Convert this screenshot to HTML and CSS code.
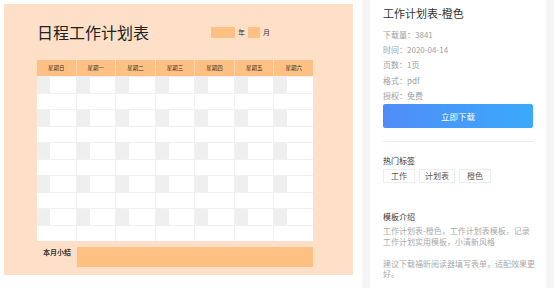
FILE: index.html
```html
<!DOCTYPE html>
<html lang="zh-CN">
<head>
    <meta charset="UTF-8">
    <meta name="viewport" content="width=device-width, initial-scale=1.0">
    <title>工作计划表-橙色</title>
    <link rel="stylesheet" href="styles.css">
</head>
<body>
    <div class="preview">
        <div class="sheet">
            <div class="sheet-head">
                <h1 class="sheet-title">日程工作计划表</h1>
                <div class="date">
                    <span class="date-box year"></span>
                    <span>年</span>
                    <span class="date-box month"></span>
                    <span>月</span>
                </div>
            </div>

            <div class="week-head">
                <div>星期日</div>
                <div>星期一</div>
                <div>星期二</div>
                <div>星期三</div>
                <div>星期四</div>
                <div>星期五</div>
                <div>星期六</div>
            </div>
            <div class="week-body" id="week-body"></div>

            <div class="summary">
                <div class="summary-label">本月小结</div>
                <div class="summary-box"></div>
            </div>
        </div>
    </div>

    <div class="info">
        <h2 class="info-title">工作计划表-橙色</h2>
        <ul class="meta">
            <li>下载量：3841</li>
            <li>时间：2020-04-14</li>
            <li>页数：1页</li>
            <li>格式：pdf</li>
            <li>授权：免费</li>
        </ul>
        <button class="btn">立即下载</button>

        <div class="divider"></div>

        <h3 class="section-title">热门标签</h3>
        <div class="tags">
            <span class="tag">工作</span>
            <span class="tag">计划表</span>
            <span class="tag">橙色</span>
        </div>

        <h3 class="section-title intro-title">模板介绍</h3>
        <p class="desc">工作计划表-橙色，工作计划表模板，记录工作计划实用模板，小清新风格</p>
        <p class="desc">建议下载福昕阅读器填写表单，适配效果更好。</p>
    </div>

    <script>
        const body = document.getElementById('week-body');
        for (let r = 0; r < 10; r++) {
            for (let c = 0; c < 7; c++) {
                const cell = document.createElement('div');
                cell.className = r % 2 === 0 ? 'cell cell-date' : 'cell';
                body.appendChild(cell);
            }
        }
    </script>
</body>
</html>
```

FILE: styles.css
```css
* {
    margin: 0;
    padding: 0;
    box-sizing: border-box;
    font-family: "Noto Sans CJK SC", "Noto Sans", sans-serif;
}

body {
    background-color: #f5f5f5;
    display: flex;
    gap: 8px;
    height: 288px;
    overflow: hidden;
}

.preview {
    width: 362px;
    flex: none;
    background: #fff;
    padding: 4px 9px 0 4px;
}

.sheet {
    background: #fee0c8;
    height: 271px;
    padding: 18px 40px 0 33px;
}

.sheet-head {
    display: flex;
    align-items: center;
    height: 20px;
}

.sheet-title {
    width: 174px;
    flex: none;
    font-size: 16px;
    font-weight: 400;
    line-height: 20px;
    color: #222;
}

.date {
    display: flex;
    align-items: center;
    gap: 3px;
    font-size: 7px;
    color: #333;
}

.date-box {
    display: block;
    height: 11px;
    background: #ffc183;
}

.date-box.year {
    width: 24px;
}

.date-box.month {
    width: 12px;
}

.week-head {
    margin-top: 18px;
    display: grid;
    grid-template-columns: repeat(7, 1fr);
    gap: 1px;
    background: #ffd7b0;
    height: 16px;
}

.week-head div {
    background: #ffc183;
    font-size: 5.5px;
    line-height: 16px;
    text-align: center;
    color: #3e2c1e;
}

.week-body {
    display: grid;
    grid-template-columns: repeat(7, 1fr);
    grid-template-rows: repeat(10, 1fr);
    gap: 1px;
    background: #f1f1f1;
    height: 165px;
    border-top: 1px solid #f1f1f1;
}

.cell {
    background: #fff;
}

.cell-date {
    background: linear-gradient(90deg, #efefef 13px, #fff 13px);
}

.summary {
    display: flex;
    margin-top: 6px;
}

.summary-label {
    width: 40px;
    flex: none;
    padding-left: 6px;
    font-size: 7px;
    font-weight: 700;
    line-height: 11px;
    color: #333;
}

.summary-box {
    flex: 1;
    height: 20px;
    background: #ffc183;
}

.info {
    width: 176px;
    flex: none;
    background: #fff;
    padding: 5px 10px 0 13px;
}

.info-title {
    font-size: 11px;
    font-weight: 400;
    line-height: 16px;
    color: #333;
}

.meta {
    list-style: none;
    margin-top: 6px;
    font-size: 8px;
    line-height: 15.2px;
    color: #a0a0a0;
}

.btn {
    display: block;
    width: 150px;
    height: 24px;
    margin-top: 1px;
    border: none;
    border-radius: 2px;
    background: linear-gradient(90deg, #4f8df8, #3aa9fc);
    color: #fff;
    font-size: 8.5px;
    cursor: pointer;
}

.divider {
    width: 151px;
    height: 1px;
    background: #eee;
    margin-top: 13px;
}

.section-title {
    margin-top: 13px;
    font-size: 8px;
    font-weight: 400;
    line-height: 12px;
    color: #333;
}

.tags {
    display: flex;
    gap: 4px;
    margin-top: 2px;
}

.tag {
    min-width: 32px;
    height: 14px;
    padding: 0 5px;
    border: 1px solid #eee;
    font-size: 8px;
    line-height: 12px;
    text-align: center;
    color: #555;
}

.intro-title {
    margin-top: 28px;
}

.desc {
    font-size: 8px;
    line-height: 10.8px;
    color: #aaa;
}

.desc + .desc {
    margin-top: 11px;
}

.intro-title + .desc {
    margin-top: 3px;
}
```
